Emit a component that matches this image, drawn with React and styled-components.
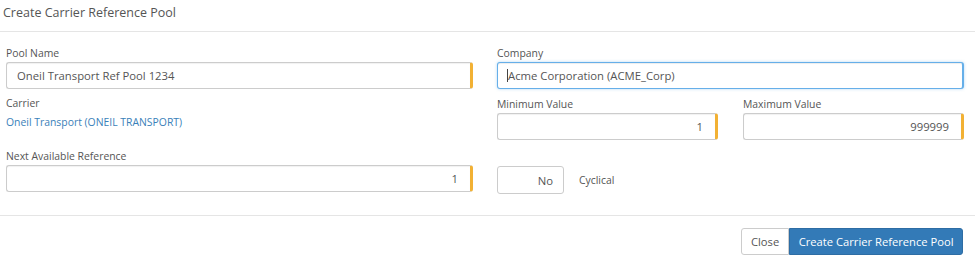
import React from "react"
import styled, { createGlobalStyle } from "styled-components"

const GlobalStyle = createGlobalStyle`
  html, body {
    margin: 0;
    padding: 0;
    background: #fff;
  }
  body {
    font-family: "Open Sans", "Liberation Sans", Arial, sans-serif;
    color: #555;
  }
`

const App = () => {
  return (
    <Modal>
      <GlobalStyle />
      <Header>
        <Title>Create Carrier Reference Pool</Title>
      </Header>
      <Body>
        <Column>
          <Label>Pool Name</Label>
          <Input required defaultValue="Oneil Transport Ref Pool 1234" />
          <Label $top={6}>Carrier</Label>
          <CarrierLink href="#">Oneil Transport (ONEIL TRANSPORT)</CarrierLink>
          <Label $top={18}>Next Available Reference</Label>
          <Input required $align="right" defaultValue="1" />
        </Column>
        <Column>
          <Label>Company</Label>
          <FocusWrap>
            <Input $focused defaultValue="Acme Corporation (ACME_Corp)" />
            <Caret />
          </FocusWrap>
          <Pair>
            <Column>
              <Label $top={7}>Minimum Value</Label>
              <Input required $align="right" defaultValue="1" />
            </Column>
            <Column>
              <Label $top={7}>Maximum Value</Label>
              <Input required $align="right" defaultValue="999999" />
            </Column>
          </Pair>
          <ToggleRow>
            <Toggle>No</Toggle>
            <ToggleLabel>Cyclical</ToggleLabel>
          </ToggleRow>
        </Column>
      </Body>
      <Footer>
        <ButtonGroup>
          <Button>Close</Button>
          <Button $primary>Create Carrier Reference Pool</Button>
        </ButtonGroup>
      </Footer>
    </Modal>
  )
}

export default App

const Modal = styled.div`
  width: 975px;
  height: 262px;
  background: #fff;
  overflow: hidden;
`

const Header = styled.div`
  height: 32px;
  border-bottom: 1px solid #e5e5e5;
  padding: 5px 3px 0;
  box-sizing: border-box;
`

const Title = styled.h4`
  margin: 0;
  font-size: 12.5px;
  line-height: 16px;
  font-weight: 400;
  color: #555;
`

const Body = styled.div`
  display: grid;
  grid-template-columns: 467px 467px;
  column-gap: 24px;
  padding: 13px 11px 21px 6px;
  border-bottom: 1px solid #e5e5e5;
`

const Column = styled.div`
  display: flex;
  flex-direction: column;
  min-width: 0;
`

const Pair = styled.div`
  display: grid;
  grid-template-columns: 221px 221px;
  column-gap: 25px;
`

const Label = styled.label`
  display: block;
  margin-top: ${(p) => p.$top || 0}px;
  font-size: 10.4px;
  line-height: 16px;
  color: #555;
`

const FocusWrap = styled.div`
  position: relative;
`

const Caret = styled.span`
  position: absolute;
  left: 10px;
  top: 8px;
  width: 1px;
  height: 13px;
  background: #444;
`

const Input = styled.input`
  display: block;
  width: 100%;
  height: 27px;
  margin-top: 1px;
  box-sizing: border-box;
  padding: 0 ${(p) => (p.$align === "right" ? "12px" : "10px")};
  font-family: "Open Sans", "Liberation Sans", Arial, sans-serif;
  font-size: 11.3px;
  color: #555;
  text-align: ${(p) => p.$align || "left"};
  background: #fff;
  border: 1px solid ${(p) => (p.$focused ? "#66afe9" : "#ccc")};
  border-right: ${(p) =>
    p.required ? "3px solid #f2b134" : p.$focused ? "2px solid #66afe9" : "1px solid #ccc"};
  border-radius: 3px;
  box-shadow: ${(p) =>
    p.$focused
      ? "inset 0 1px 1px rgba(0,0,0,.075), 0 0 3px rgba(102,175,233,.5)"
      : "inset 0 1px 1px rgba(0,0,0,.06)"};
  outline: none;
`

const CarrierLink = styled.a`
  display: block;
  margin-top: 3px;
  font-size: 10.4px;
  line-height: 16px;
  color: #3a7fb9;
  text-decoration: none;
`

const ToggleRow = styled.div`
  display: flex;
  align-items: center;
  gap: 15px;
  margin-top: 26px;
`

const Toggle = styled.div`
  width: 67px;
  height: 28px;
  box-sizing: border-box;
  border: 1px solid #ccc;
  border-radius: 3px;
  display: flex;
  align-items: center;
  justify-content: flex-end;
  padding-right: 10px;
  font-size: 11.3px;
  color: #555;
`

const ToggleLabel = styled.span`
  font-size: 10.4px;
  color: #555;
`

const Footer = styled.div`
  display: flex;
  justify-content: flex-end;
  padding: 12px 12px 0 0;
`

const ButtonGroup = styled.div`
  display: flex;
`

const Button = styled.button`
  height: 27px;
  box-sizing: border-box;
  padding: 0 ${(p) => (p.$primary ? "8.5px" : "9px")};
  font-family: "Open Sans", "Liberation Sans", Arial, sans-serif;
  font-size: 11.2px;
  color: ${(p) => (p.$primary ? "#fff" : "#555")};
  background: ${(p) => (p.$primary ? "#337ab7" : "#fff")};
  border: 1px solid ${(p) => (p.$primary ? "#2e6da4" : "#ccc")};
  border-radius: ${(p) => (p.$primary ? "0 3px 3px 0" : "3px 0 0 3px")};
  cursor: pointer;
`
